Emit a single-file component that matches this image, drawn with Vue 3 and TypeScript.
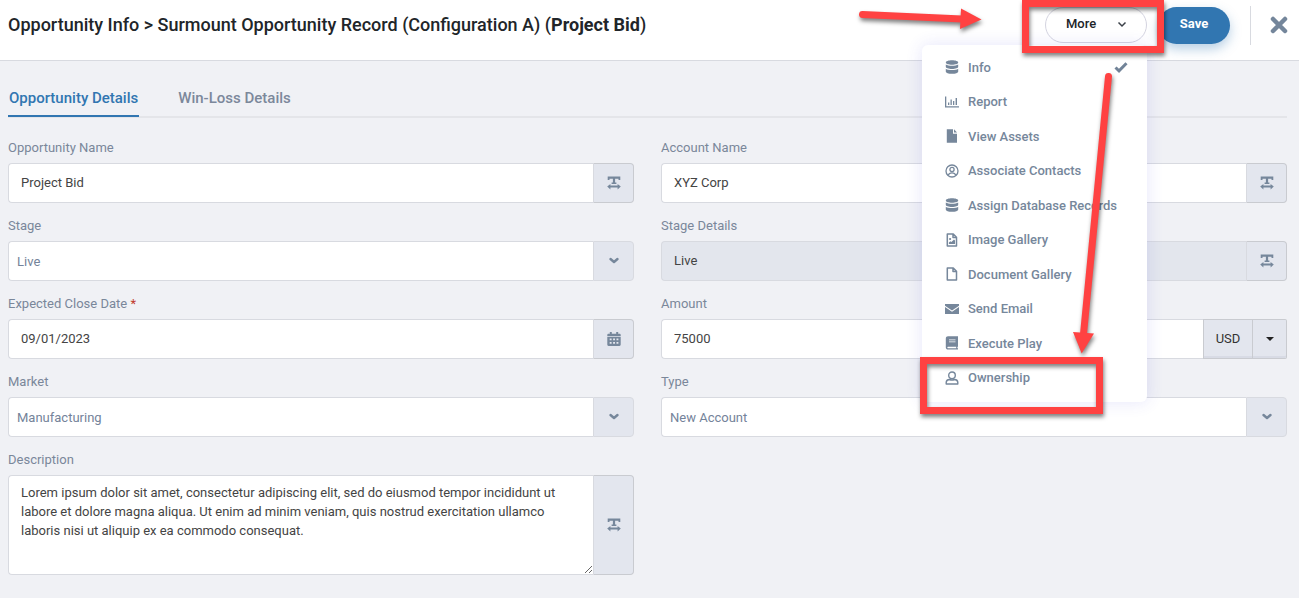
<script setup lang="ts">
import { ref } from 'vue'

type IconName =
  | 'database' | 'chart' | 'file' | 'contact' | 'image' | 'document'
  | 'mail' | 'book' | 'user' | 'width' | 'chevron' | 'calendar'

interface Field {
  id: string
  label: string
  kind: 'text' | 'select' | 'amount' | 'textarea'
  icon: IconName
  value: string
  required?: boolean
  disabled?: boolean
}

const tabs = ['Opportunity Details', 'Win-Loss Details']
const activeTab = ref(tabs[0])

const menu: { label: string; icon: IconName; checked?: boolean }[] = [
  { label: 'Info', icon: 'database', checked: true },
  { label: 'Report', icon: 'chart' },
  { label: 'View Assets', icon: 'file' },
  { label: 'Associate Contacts', icon: 'contact' },
  { label: 'Assign Database Records', icon: 'database' },
  { label: 'Image Gallery', icon: 'image' },
  { label: 'Document Gallery', icon: 'document' },
  { label: 'Send Email', icon: 'mail' },
  { label: 'Execute Play', icon: 'book' },
  { label: 'Ownership', icon: 'user' },
]

const fields = ref<Field[]>([
  { id: 'name', label: 'Opportunity Name', kind: 'text', icon: 'width', value: 'Project Bid' },
  { id: 'account', label: 'Account Name', kind: 'text', icon: 'width', value: 'XYZ Corp' },
  { id: 'stage', label: 'Stage', kind: 'select', icon: 'chevron', value: 'Live' },
  { id: 'stage-details', label: 'Stage Details', kind: 'text', icon: 'width', value: 'Live', disabled: true },
  { id: 'close-date', label: 'Expected Close Date', kind: 'text', icon: 'calendar', value: '09/01/2023', required: true },
  { id: 'amount', label: 'Amount', kind: 'amount', icon: 'chevron', value: '75000' },
  { id: 'market', label: 'Market', kind: 'select', icon: 'chevron', value: 'Manufacturing' },
  { id: 'type', label: 'Type', kind: 'select', icon: 'chevron', value: 'New Account' },
  {
    id: 'description', label: 'Description', kind: 'textarea', icon: 'width',
    value: 'Lorem ipsum dolor sit amet, consectetur adipiscing elit, sed do eiusmod tempor incididunt ut labore et dolore magna aliqua. Ut enim ad minim veniam, quis nostrud exercitation ullamco laboris nisi ut aliquip ex ea commodo consequat.',
  },
])

const icons: Record<IconName, string> = {
  database:
    '<path d="M.8 2.600C.8 1.200 3.500.3 7 .3s6.200.9 6.200 2.300S10.500 4.800 7 4.800.8 4 .8 2.600Z"/><path d="M.8 4.500c1.300 1 3.700 1.300 6.200 1.300s4.900-.3 6.200-1.300v2.200C13.200 8 10.500 8.900 7 8.900S.8 8 .8 6.700Z"/><path d="M.8 8.700c1.300 1 3.700 1.300 6.200 1.300s4.900-.3 6.200-1.300v2.700c0 1.400-2.700 2.300-6.200 2.300s-6.200-.9-6.200-2.300Z"/>',
  chart:
    '<path d="M0 1.500h1.300v9.700H14v1.300H0Z"/><path d="M3 7.500h1.300V10H3ZM5.500 4.500h1.300V10H5.500ZM8 6h1.300v4H8ZM10.600 3h1.400v7h-1.400Z"/>',
  file: '<path d="M1.800.3H8v4.400h4v9H1.800Z"/><path d="M9 .3 12 3.600H9Z"/>',
  contact:
    '<g fill="none" stroke="currentColor" stroke-width="1.300"><circle cx="7" cy="7" r="6"/><circle cx="7" cy="5.500" r="2.100"/><path d="M3.200 11.300c.6-2 1.800-2.500 3.800-2.500s3.200.5 3.800 2.500"/></g>',
  image:
    '<path fill="none" stroke="currentColor" stroke-width="1.500" stroke-linejoin="round" d="M2.300 1h6l3.200 3.200V13H2.300ZM8 1v3.500h3.500"/><circle cx="5.100" cy="6" r="1.100"/><path d="M3.900 11V9.500l1.500-1.200 1 .8L9 6.600l1 1V11Z"/>',
  document:
    '<path fill="none" stroke="currentColor" stroke-width="1.500" stroke-linejoin="round" d="M2.300 1h6l3.200 3.200V13H2.300ZM8 1v3.500h3.500"/>',
  mail: '<path d="M0 2h14v1.700L7 8.500 0 3.700Z"/><path d="m0 5.100 7 4.700 7-4.700V12H0Z"/>',
  book: '<path fill-rule="evenodd" d="M3 .3h10v10.500h-.6v1.400h.6v1.400H3c-1.200 0-2.200-.8-2.200-2.100V2.400C.8 1.200 1.800.3 3 .3Zm0 10.500c-.9 0-.9 1.400 0 1.400h8.200v-1.400ZM4 3.500v.8h6.500v-.8Zm0 1.900v.8h6.500v-.8Z"/>',
  user:
    '<g fill="none" stroke="currentColor" stroke-width="1.400" stroke-linejoin="round"><circle cx="7" cy="4.300" r="3.300"/><path d="M4.500 8.500C2.200 8.700 1.200 10 1.200 11.500V13h11.600v-1.500c0-1.500-1-2.800-3.300-3-1.600.6-3.400.6-5 0Z"/></g>',
  width:
    '<path d="M.7.500h12.600v3.600h-1.800V2.700H8.100v3.800h1.300v1.600H4.600V6.500h1.300V2.700H2.500v1.400H.7Z"/><path d="M.2 10.600 3.400 7.900v1.700h7.200V7.900l3.200 2.700-3.200 2.800v-1.800H3.400v1.800Z"/>',
  chevron:
    '<path fill="none" stroke="currentColor" stroke-width="2.400" stroke-linecap="round" stroke-linejoin="round" d="m3.500 5 3.500 3 3.500-3"/>',
  calendar:
    '<path d="M2.800 0h2v1.700h4.400V0h2v1.700h1.300c.7 0 1.200.5 1.200 1.200v1.300H.3V2.900c0-.7.5-1.200 1.200-1.200h1.300Z"/><path fill-rule="evenodd" d="M.3 5h13.400v7.600c0 .8-.5 1.300-1.200 1.300h-11c-.7 0-1.200-.5-1.200-1.300ZM2.700 6.500v1.700h1.900V6.500Zm3.400 0v1.700H8V6.500Zm3.400 0v1.700h1.900V6.500ZM2.700 10v1.700h1.900V10Zm3.400 0v1.700H8V10Zm3.400 0v1.700h1.900V10Z"/>',
}
</script>

<template>
  <div class="page">
    <header class="header">
      <h1 class="title">Opportunity Info &gt; Surmount Opportunity Record (Configuration A) (<b>Project Bid</b>)</h1>
      <div class="actions">
        <div class="more">
          <button type="button" class="more-button" aria-haspopup="menu" aria-expanded="true">
            More
            <svg class="more-chevron" viewBox="0 0 10 10" aria-hidden="true"><path d="m1.500 3.500 3.500 3.500 3.500-3.500" /></svg>
          </button>
          <div class="menu" role="menu">
            <button v-for="item in menu" :key="item.label" type="button" role="menuitem" class="menu-item">
              <svg class="icon" viewBox="0 0 14 14" aria-hidden="true" v-html="icons[item.icon]"></svg>
              <span>{{ item.label }}</span>
              <svg v-if="item.checked" class="check" viewBox="0 0 14 14" aria-hidden="true"><path d="m1.500 7.500 3.500 3.300 7.500-7.500" /></svg>
            </button>
          </div>
        </div>
        <button type="button" class="save">Save</button>
        <span class="divider"></span>
        <button type="button" class="close" aria-label="Close">
          <svg viewBox="0 0 18 18" aria-hidden="true"><path d="m3 3 12 12M15 3 3 15" /></svg>
        </button>
      </div>
    </header>

    <main class="content">
      <nav class="tabs" role="tablist">
        <button
          v-for="tab in tabs" :key="tab" type="button" role="tab" class="tab"
          :class="{ active: tab === activeTab }" :aria-selected="tab === activeTab" @click="activeTab = tab"
        >{{ tab }}</button>
      </nav>

      <form class="form" @submit.prevent>
        <div v-for="field in fields" :key="field.id" class="field">
          <label class="label" :for="field.id">{{ field.label }} <span v-if="field.required" class="required">*</span></label>
          <div class="group" :class="field.kind">
            <select v-if="field.kind === 'select'" :id="field.id" v-model="field.value" class="control">
              <option>{{ field.value }}</option>
            </select>
            <textarea v-else-if="field.kind === 'textarea'" :id="field.id" v-model="field.value" class="control" spellcheck="false"></textarea>
            <input v-else :id="field.id" v-model="field.value" type="text" class="control" :disabled="field.disabled">
            <template v-if="field.kind === 'amount'">
              <button type="button" class="currency">USD</button>
              <button type="button" class="currency-toggle" aria-label="Choose currency">
                <svg viewBox="0 0 8 4" aria-hidden="true"><path d="M0 0h8L4 4Z" /></svg>
              </button>
            </template>
            <span v-else class="addon">
              <svg class="icon" viewBox="0 0 14 14" aria-hidden="true" v-html="icons[field.icon]"></svg>
            </span>
          </div>
        </div>
      </form>
    </main>

    <svg class="annotations" viewBox="849 0 450 430" aria-hidden="true">
      <g class="callout">
        <path class="stroke" d="M1025.500 3.500h135v46h-135Z" />
        <path class="stroke" d="M923.500 360.500h176v50h-176Z" />
        <path class="stroke round" d="M862.500 14.500 962 19" />
        <path d="M961 8.500 981.500 19.500 960 29Z" />
        <path class="stroke round" d="M1108.500 76.500 1083.500 334" />
        <path d="M1073 332 1094 333.500 1081.700 353.500Z" />
      </g>
    </svg>
  </div>
</template>

<style>
body {
  margin: 0;
  background: #f0f1f5;
}
</style>

<style scoped>
.page {
  position: relative;
  min-height: 100vh;
  font-family: Roboto, "Liberation Sans", sans-serif;
  font-size: 13px;
  color: #444;
  background: #f0f1f5;
  overflow: hidden;
}

button,
input,
select,
textarea {
  box-sizing: border-box;
  margin: 0;
  font: inherit;
  color: inherit;
}

button {
  padding: 0;
  border: 0;
  background: none;
  cursor: pointer;
}

.icon {
  width: 14px;
  height: 14px;
  flex: none;
  fill: currentColor;
}

.header {
  display: flex;
  align-items: center;
  justify-content: space-between;
  box-sizing: border-box;
  height: 61px;
  padding: 0 11px 10px 8px;
  border-bottom: 1px solid #d8dae0;
  background: #fff;
}

.title {
  margin: 0;
  font-size: 18px;
  font-weight: 500;
  line-height: 24px;
  color: #212529;
}

.title b {
  font-weight: 700;
}

.actions {
  display: flex;
  align-items: center;
}

.more {
  position: relative;
}

.more-button {
  display: flex;
  align-items: center;
  justify-content: space-between;
  width: 102px;
  height: 36px;
  padding: 0 19px 3px 20px;
  border: 1px solid #d4d4e0;
  border-radius: 18px;
  background: #fff;
  font-weight: 500;
  color: #212529;
}

.more-chevron {
  width: 10px;
  height: 10px;
  fill: none;
  stroke: #3b4148;
  stroke-width: 1.500;
}

.menu {
  position: absolute;
  z-index: 2;
  top: 38px;
  right: 0;
  display: grid;
  grid-auto-rows: 1fr;
  box-sizing: border-box;
  width: 225px;
  height: 357px;
  padding: 5px 0 7px;
  border-radius: 6px;
  background: #fff;
  box-shadow: 0 0 16px 1px rgba(69, 65, 220, 0.12);
}

.menu-item {
  display: flex;
  align-items: center;
  gap: 9px;
  padding: 0 19px 0 23px;
  font-size: 13px;
  font-weight: 500;
  color: #76879b;
}

.check {
  width: 14px;
  height: 14px;
  margin-left: auto;
  fill: none;
  stroke: #718398;
  stroke-width: 3;
}

.save {
  width: 72px;
  height: 37px;
  margin-left: 11px;
  padding-bottom: 3px;
  border-radius: 19px;
  background: #3176b1;
  box-shadow: 0 5px 12px rgba(49, 118, 177, 0.35);
  font-weight: 700;
  color: #fff;
}

.divider {
  width: 1px;
  height: 39px;
  margin: 0 19px 0 20px;
  background: #d8dae0;
}

.close svg {
  display: block;
  width: 18px;
  height: 18px;
  fill: none;
  stroke: #74869b;
  stroke-width: 4.500;
  stroke-linecap: round;
}

.content {
  padding: 19px 12px 20px 8px;
}

.tabs {
  display: flex;
  gap: 38px;
  border-bottom: 2px solid #e4e5e9;
}

.tab {
  height: 37px;
  margin-bottom: -1px;
  padding: 0 1px;
  border-bottom: 2px solid transparent;
  font-size: 15px;
  font-weight: 500;
  color: #7c889b;
}

.tab.active {
  border-color: #3176b1;
  color: #3176b1;
}

.form {
  display: grid;
  grid-template-columns: repeat(2, minmax(0, 1fr));
  gap: 13px 27px;
  padding-top: 20px;
}

.label {
  display: block;
  margin-bottom: 5px;
  line-height: 20px;
  color: #7a879a;
}

.required {
  color: #c0392b;
}

.group {
  display: flex;
  min-height: 40px;
}

.control {
  flex: 1;
  min-width: 0;
  padding: 0 12px 2px;
  border: 1px solid #d8dae0;
  border-right: 0;
  border-radius: 4px 0 0 4px;
  outline: 0;
  background: #fff;
  color: #444;
}

.control:disabled {
  background: #e3e6ed;
}

select.control {
  padding: 0 8px;
  appearance: none;
  color: #74839a;
}

textarea.control {
  height: 100px;
  padding: 7px 12px;
  line-height: 19px;
  resize: vertical;
}

.addon {
  display: flex;
  align-items: center;
  justify-content: center;
  box-sizing: border-box;
  width: 41px;
  border: 1px solid #c9cbd0;
  border-left-color: #d8dae0;
  border-radius: 0 4px 4px 0;
  background: #e3e6ee;
  color: #76879b;
}

.select .addon {
  border-color: #d8dae0;
}

.currency,
.currency-toggle {
  display: flex;
  align-items: center;
  justify-content: center;
  width: 50px;
  padding-bottom: 2px;
  border: 1px solid #c9cbd0;
  background: #e3e6ee;
  box-shadow: inset 0 -2px 0 #d8dbe5;
  color: #333;
}

.currency-toggle {
  width: 34px;
  padding-bottom: 0;
  border-left: 0;
  border-radius: 0 2px 2px 0;
}

.currency-toggle svg {
  width: 8px;
  height: 4px;
  fill: #222;
}

.annotations {
  position: absolute;
  z-index: 3;
  top: 0;
  right: 0;
  width: 450px;
  height: 430px;
  pointer-events: none;
}

.callout {
  fill: #ff4242;
  filter: drop-shadow(1px 3px 2px rgba(0, 0, 0, 0.5));
}

.stroke {
  fill: none;
  stroke: #ff4242;
  stroke-width: 7;
}

.round {
  stroke-linecap: round;
}
</style>
